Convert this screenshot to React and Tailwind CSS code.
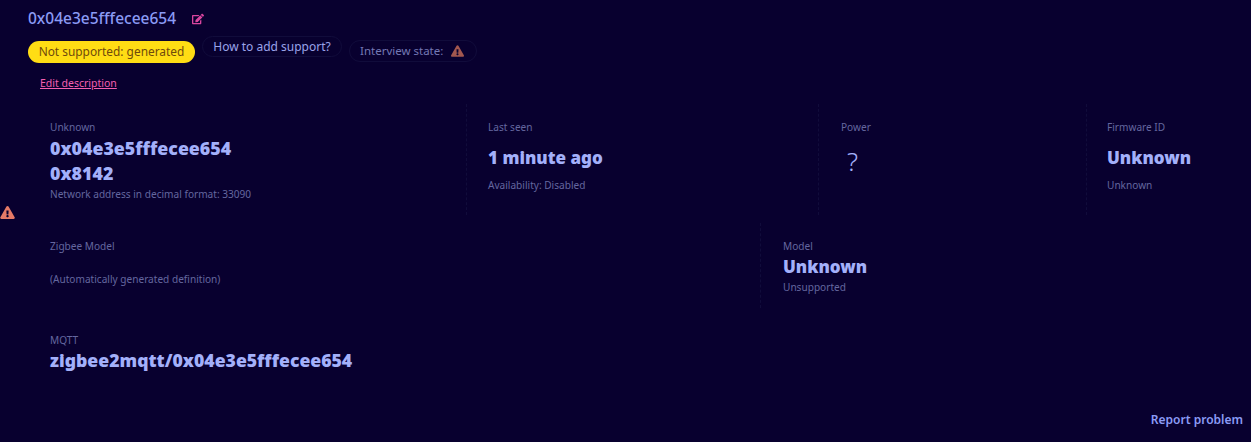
import { FaEdit, FaExclamationTriangle } from 'react-icons/fa'

const font = { sans: 'font-["Noto_Sans","Open_Sans",sans-serif]' }

function Stat({ className, title, desc, children }) {
  return (
    <div className={`flex flex-col ${className}`}>
      <div className="text-[10.1px] leading-[14px] text-[#64679f]">{title}</div>
      {children}
      {desc && <div className="text-[10.1px] leading-[14px] text-[#64679f]">{desc}</div>}
    </div>
  )
}

function Value({ children, className = '' }) {
  return <div className={`leading-[25px] font-black text-[#a3b0fa] ${className}`}>{children}</div>
}

export default function App() {
  return (
    <div className={`relative h-[442px] w-[1251px] overflow-hidden bg-[#08002f] ${font.sans}`}>
      <div className="pl-[28px] pt-[9px]">
        <div className="flex h-[20px] items-center gap-[16px]">
          <span className="text-[15.5px] font-medium text-[#8b9bf5]">0x04e3e5fffecee654</span>
          <FaEdit className="h-[12px] w-[12px] text-[#d9459f]" />
        </div>

        <div className="mt-[7px] flex h-[27px] items-start">
          <span className="mt-[5px] flex h-[22px] w-[167px] items-center justify-center rounded-full bg-[#ffdd14] text-[11.9px] text-[#6f4a0c]">
            Not supported: generated
          </span>
          <span className="ml-[7px] flex h-[21px] w-[140px] items-center justify-center rounded-full border border-[#110c3b] text-[12px] text-[#9aa3ea]">
            How to add support?
          </span>
          <span className="ml-[7px] mt-[4px] flex h-[22px] w-[128px] items-center gap-[8px] rounded-full border border-[#110c3b] pl-[10px] text-[11.5px] text-[#7478b4]">
            Interview state:
            <FaExclamationTriangle className="h-[12px] w-[13px] text-[#a2574f]" />
          </span>
        </div>

        <a className="ml-[12px] mt-[13px] block w-fit text-[10.5px] leading-[14px] text-[#f45fb0] underline">Edit description</a>

        <div className="mt-[14px] flex h-[111px]">
          <Stat className="w-[438px] pl-[22px] pt-[16px]" title="Unknown" desc="Network address in decimal format: 33090">
            <Value className="mt-[2px] text-[17.8px]">0x04e3e5fffecee654</Value>
            <Value className="mb-[1px] text-[17.8px]">0x8142</Value>
          </Stat>
          <Stat className="w-[352px] border-l border-dashed border-[#110c3b] pl-[21px] pt-[16px]" title="Last seen" desc="Availability: Disabled">
            <Value className="mt-[11px] mb-[8px] text-[17px]">1 minute ago</Value>
          </Stat>
          <Stat className="w-[268px] border-l border-dashed border-[#110c3b] pl-[22px] pt-[16px]" title="Power">
            <div className="ml-[6px] mt-[12px] text-[26px] leading-[30px] font-light text-[#a3b0fa]">?</div>
          </Stat>
          <Stat className="flex-1 border-l border-dashed border-[#110c3b] pl-[20px] pt-[16px]" title="Firmware ID" desc="Unknown">
            <Value className="mt-[11px] mb-[8px] text-[17px]">Unknown</Value>
          </Stat>
        </div>

        <div className="mt-[8px] flex h-[85px]">
          <Stat className="w-[732px] pl-[22px] pt-[16px]" title="Zigbee Model" desc="(Automatically generated definition)">
            <div className="h-[19px]" />
          </Stat>
          <Stat className="flex-1 border-l border-dashed border-[#110c3b] pl-[22px] pt-[16px]" title="Model" desc="Unsupported">
            <Value className="mt-[1px] mb-[1px] text-[17px]">Unknown</Value>
          </Stat>
        </div>

        <Stat className="mt-[15px] pl-[22px] pt-[10px]" title="MQTT">
          <Value className="mt-[1px] text-[17.65px]">zigbee2mqtt/0x04e3e5fffecee654</Value>
        </Stat>
      </div>

      <FaExclamationTriangle className="absolute left-0 top-[206px] h-[13px] w-[15px] text-[#e57a67]" />
      <a className="absolute right-[8px] top-[411px] text-[12px] font-semibold text-[#8b9bf5]">Report problem</a>
    </div>
  )
}
